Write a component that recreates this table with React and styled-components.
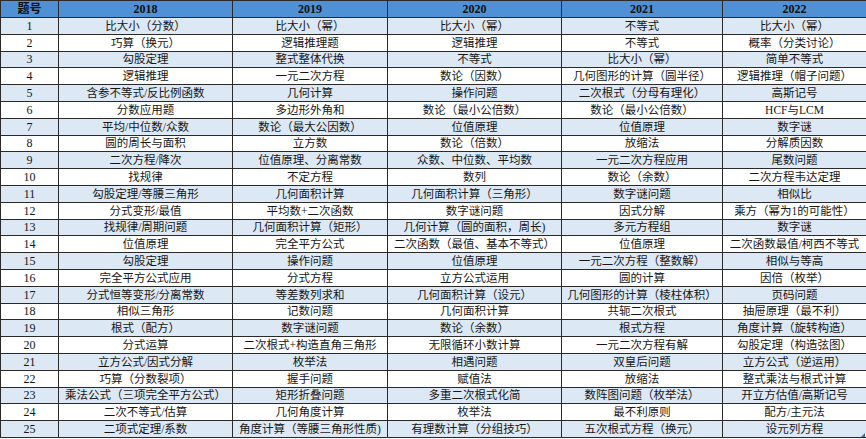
import React from "react"
import styled, { createGlobalStyle } from "styled-components"

const GlobalStyle = createGlobalStyle`
html, body {
  margin: 0;
  padding: 0;
  background: #ffffff;
}
`

const Wrap = styled.div`
position: relative;
width: 866px;
`

const Corner = styled.div`
position: absolute;
right: 1px;
bottom: 1px;
width: 0;
height: 0;
border-left: 4px solid transparent;
border-bottom: 4px solid #3a6fc4;
`

const Table = styled.table`
width: 866px;
border-collapse: collapse;
table-layout: fixed;
font-family: "Liberation Serif", "Noto Sans CJK SC", serif;
font-size: 11.5px;
color: #161616;
`

const Col = styled.col`
width: ${p => p.w}px;
`

const HeadRow = styled.tr`
height: 17px;
background: #5090d4;
`

const HeadCell = styled.th`
border: 1px solid #2a2a2a;
padding: 0;
font-weight: bold;
font-size: 12px;
color: #111;
text-align: center;
line-height: 15px;
`

const Row = styled.tr`
height: 16.8px;
background: ${p => (p.striped ? "#dce8f4" : "#ffffff")};
`

const Cell = styled.td`
border: 1px solid #2a2a2a;
padding: 0;
text-align: center;
white-space: nowrap;
overflow: hidden;
line-height: 14px;
font-size: ${p => (p.num ? "12px" : "11.5px")};
`

const widths = [58, 174, 155, 174, 161, 144]
const years = ["2018", "2019", "2020", "2021", "2022"]

const rows = [
  ["比大小（分数）", "比大小（幂）", "比大小（幂）", "不等式", "比大小（幂）"],
  ["巧算（换元）", "逻辑推理题", "逻辑推理", "不等式", "概率（分类讨论）"],
  ["勾股定理", "整式整体代换", "不等式", "比大小（幂）", "简单不等式"],
  ["逻辑推理", "一元二次方程", "数论（因数）", "几何图形的计算（圆半径）", "逻辑推理（帽子问题）"],
  ["含参不等式/反比例函数", "几何计算", "操作问题", "二次根式（分母有理化）", "高斯记号"],
  ["分数应用题", "多边形外角和", "数论（最小公倍数）", "数论（最小公倍数）", "HCF与LCM"],
  ["平均/中位数/众数", "数论（最大公因数）", "位值原理", "位值原理", "数字谜"],
  ["圆的周长与面积", "立方数", "数论（倍数）", "放缩法", "分解质因数"],
  ["二次方程/降次", "位值原理、分离常数", "众数、中位数、平均数", "一元二次方程应用", "尾数问题"],
  ["找规律", "不定方程", "数列", "数论（余数）", "二次方程韦达定理"],
  ["勾股定理/等腰三角形", "几何面积计算", "几何面积计算（三角形）", "数字谜问题", "相似比"],
  ["分式变形/最值", "平均数+二次函数", "数字谜问题", "因式分解", "乘方（幂为1的可能性）"],
  ["找规律/周期问题", "几何面积计算（矩形）", "几何计算（圆的面积，周长)", "多元方程组", "数字谜"],
  ["位值原理", "完全平方公式", "二次函数（最值、基本不等式）", "位值原理", "二次函数最值/柯西不等式"],
  ["勾股定理", "操作问题", "位值原理", "一元二次方程（整数解）", "相似与等高"],
  ["完全平方公式应用", "分式方程", "立方公式运用", "圆的计算", "因倍（枚举）"],
  ["分式恒等变形/分离常数", "等差数列求和", "几何面积计算（设元）", "几何图形的计算（棱柱体积）", "页码问题"],
  ["相似三角形", "记数问题", "几何面积计算", "共轭二次根式", "抽屉原理（最不利）"],
  ["根式（配方）", "数字谜问题", "数论（余数）", "根式方程", "角度计算（旋转构造）"],
  ["分式运算", "二次根式+构造直角三角形", "无限循环小数计算", "一元二次方程有解", "勾股定理（构造弦图）"],
  ["立方公式/因式分解", "枚举法", "相遇问题", "双皇后问题", "立方公式（逆运用）"],
  ["巧算（分数裂项）", "握手问题", "赋值法", "放缩法", "整式乘法与根式计算"],
  ["乘法公式（三项完全平方公式）", "矩形折叠问题", "多重二次根式化简", "数阵图问题（枚举法）", "开立方估值/高斯记号"],
  ["二次不等式/估算", "几何角度计算", "枚举法", "最不利原则", "配方/主元法"],
  ["二项式定理/系数", "角度计算（等腰三角形性质)", "有理数计算（分组技巧）", "五次根式方程（换元）", "设元列方程"],
]

function App() {
  return (
    <>
      <GlobalStyle />
      <Wrap>
        <Table>
          <colgroup>
            {widths.map((w, i) => <Col key={i} w={w} />)}
          </colgroup>
          <thead>
            <HeadRow>
              <HeadCell>题号</HeadCell>
              {years.map(y => <HeadCell key={y}>{y}</HeadCell>)}
            </HeadRow>
          </thead>
          <tbody>
            {rows.map((r, i) => (
              <Row key={i} striped={i % 2 === 0}>
                <Cell num>{i + 1}</Cell>
                {r.map((t, j) => <Cell key={j}>{t}</Cell>)}
              </Row>
            ))}
          </tbody>
        </Table>
        <Corner />
      </Wrap>
    </>
  )
}

export default App
